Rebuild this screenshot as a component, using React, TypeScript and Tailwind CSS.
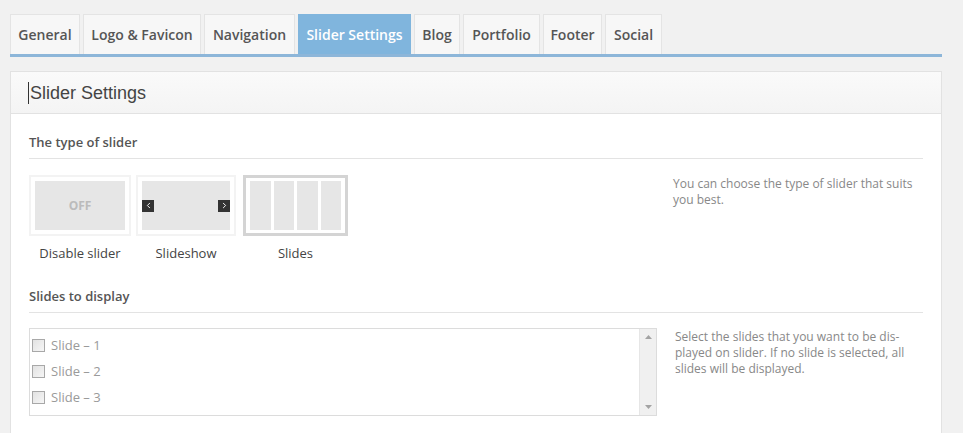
import { ChevronLeft, ChevronRight } from "lucide-react";

const tabs = [
  { label: "General", w: "w-[70px]" },
  { label: "Logo & Favicon", w: "w-[118px]" },
  { label: "Navigation", w: "w-[91px]" },
  { label: "Slider Settings", w: "w-[113px]", active: true },
  { label: "Blog", w: "w-[46px]" },
  { label: "Portfolio", w: "w-[77px]" },
  { label: "Footer", w: "w-[59px]" },
  { label: "Social", w: "w-[57px]" },
];

const font = "font-['Open_Sans',sans-serif]";

function SliderOption({
  label,
  box,
  children,
}: {
  label: string;
  box: string;
  children: React.ReactNode;
}) {
  return (
    <div className="flex flex-col items-center">
      <div className={box}>{children}</div>
      <div className="mt-[8px] text-[13px] leading-[18px] text-[#444]">{label}</div>
    </div>
  );
}

export default function App() {
  return (
    <div className={`min-h-[433px] bg-[#f1f1f1] pt-[14px] pl-[10px] pr-[21px] ${font}`}>
      <div className="flex gap-[3px] border-b-[3px] border-[#8db6d9]">
        {tabs.map((t) => (
          <div
            key={t.label}
            className={`${t.w} h-[40px] flex items-center justify-center text-[14px] font-semibold border border-b-0 ${
              t.active
                ? "bg-[#80b5dd] border-[#80b5dd] text-white"
                : "bg-[#f7f7f7] border-[#e4e4e4] text-[#555]"
            }`}
          >
            {t.label}
          </div>
        ))}
      </div>

      <div className="mt-[14px] border border-[#e2e2e2] bg-white">
        <div className="h-[42px] flex items-center pl-[17px] border-b border-[#e2e2e2] bg-gradient-to-b from-[#fafafa] to-[#f4f4f4]">
          <span className="border-l border-[#333] pl-[1px] font-['Liberation_Sans',Arial,sans-serif] text-[18px] leading-[22px] text-[#444]">
            Slider Settings
          </span>
        </div>

        <div className="px-[18px] pt-[19px] pb-[20px]">
          <div className="text-[13px] font-semibold leading-[18px] text-[#555] pb-[7px] border-b border-[#e3e3e3]">
            The type of slider
          </div>

          <div className="mt-[16px] grid grid-cols-[628px_1fr] gap-[16px]">
            <div className="flex items-start">
              <SliderOption
                label="Disable slider"
                box="w-[102px] h-[61px] border-2 border-[#f3f3f3] bg-white p-[4px]"
              >
                <div className="h-full bg-[#e6e6e6] flex items-center justify-center text-[12px] font-bold text-[#bbb]">
                  OFF
                </div>
              </SliderOption>
              <div className="ml-[5px]">
                <SliderOption
                  label="Slideshow"
                  box="w-[100px] h-[61px] border-2 border-[#f3f3f3] bg-white p-[4px]"
                >
                  <div className="h-full bg-[#e6e6e6] flex items-center justify-between">
                    <span className="w-[12px] h-[12px] bg-[#333] flex items-center justify-center">
                      <ChevronLeft className="w-[9px] h-[9px] text-white" strokeWidth={2.5} />
                    </span>
                    <span className="w-[12px] h-[12px] bg-[#333] flex items-center justify-center">
                      <ChevronRight className="w-[9px] h-[9px] text-white" strokeWidth={2.5} />
                    </span>
                  </div>
                </SliderOption>
              </div>
              <div className="ml-[7px]">
                <SliderOption
                  label="Slides"
                  box="w-[105px] h-[61px] border-[3px] border-[#d4d4d4] bg-white p-[3px]"
                >
                  <div className="h-full flex gap-[3px] px-[1px]">
                    <div className="flex-1 bg-[#e6e6e6]" />
                    <div className="flex-1 bg-[#e6e6e6]" />
                    <div className="flex-1 bg-[#e6e6e6]" />
                    <div className="flex-1 bg-[#e6e6e6]" />
                  </div>
                </SliderOption>
              </div>
            </div>
            <p className="pt-[1px] pr-[20px] text-[12px] leading-[16px] text-[#888] w-[260px]">
              You can choose the type of slider that suits you best.
            </p>
          </div>

          <div className="mt-[25px] text-[13px] font-semibold leading-[18px] text-[#555] pb-[7px] border-b border-[#e3e3e3]">
            Slides to display
          </div>

          <div className="mt-[15px] grid grid-cols-[628px_1fr] gap-[18px]">
            <div className="h-[88px] border border-[#dcdcdc] flex">
              <div className="flex-1 pt-[10px] pl-[2px] flex flex-col gap-[13px]">
                {[1, 2, 3].map((n) => (
                  <label key={n} className="flex items-center gap-[6px] text-[13px] leading-[13px] text-[#9a9a9a]">
                    <span className="w-[13px] h-[13px] border border-[#a8a8a8] bg-gradient-to-br from-[#e2e2e2] to-[#f6f6f6]" />
                    Slide – {n}
                  </label>
                ))}
              </div>
              <div className="w-[17px] bg-[#f0f0f0] border-l border-[#e6e6e6] flex flex-col items-center justify-between py-[6px]">
                <svg width="7" height="4" viewBox="0 0 7 4">
                  <path d="M3.5 0L7 4H0z" fill="#a3a3a3" />
                </svg>
                <svg width="7" height="4" viewBox="0 0 7 4">
                  <path d="M0 0h7L3.5 4z" fill="#a3a3a3" />
                </svg>
              </div>
            </div>
            <p className="pt-[1px] text-[12px] leading-[16px] text-[#888] w-[232px]">
              Select the slides that you want to be dis-played on slider. If no slide is selected, all slides will be displayed.
            </p>
          </div>
        </div>
      </div>
    </div>
  );
}
